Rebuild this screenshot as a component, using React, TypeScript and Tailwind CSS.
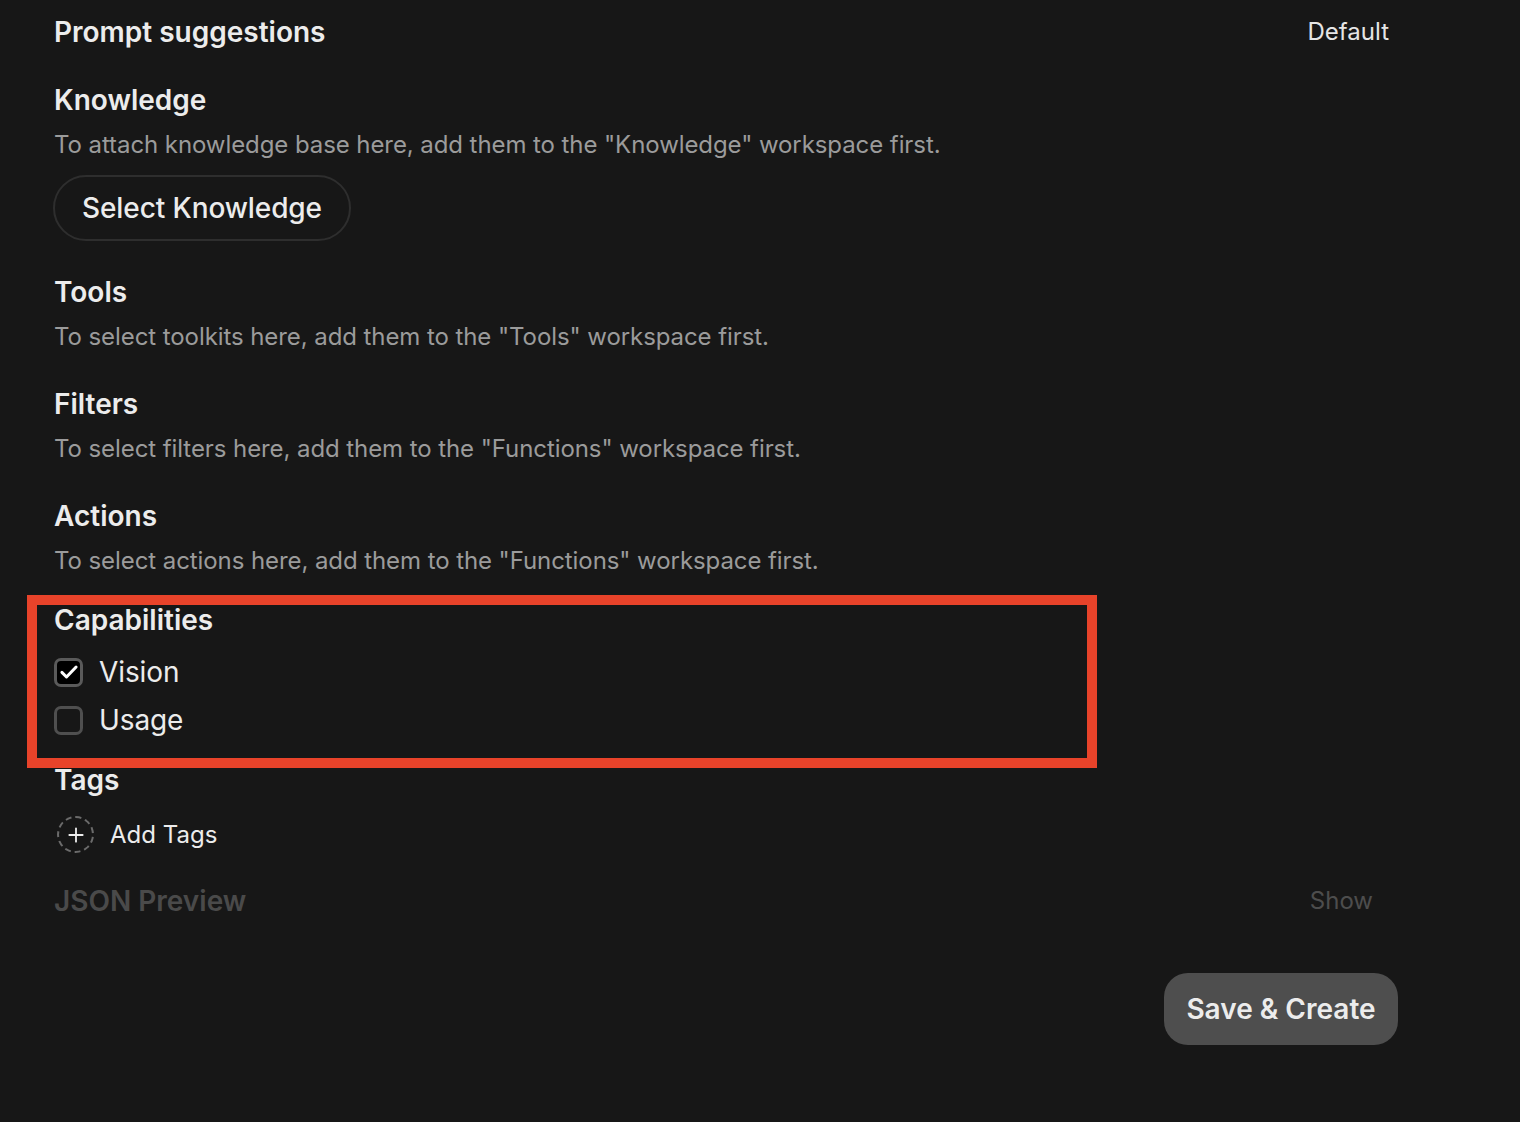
import React from 'react'

const font = { fontFamily: 'Inter, "Noto Sans", sans-serif' }

function Section({ title, desc }: { title: string; desc: string }) {
  return (
    <div>
      <div className="text-[28px] leading-[36px] font-semibold text-[#ececec]">{title}</div>
      <div className="mt-[11px] text-[24px] leading-[32px] text-[#9b9b9b] tracking-[-0.08px]">{desc}</div>
    </div>
  )
}

function Checkbox({ checked, label }: { checked: boolean; label: string }) {
  return (
    <div className="flex items-center gap-4 h-[36px]">
      <div
        className={
          checked
            ? 'w-[29px] h-[29px] rounded-[7px] border-[3px] border-[#5a5a5a] bg-black flex items-center justify-center'
            : 'w-[29px] h-[29px] rounded-[7px] border-[3px] border-[#4f4f4f]'
        }
      >
        {checked && (
          <svg width="20" height="20" viewBox="0 0 24 24" fill="none">
            <path d="M3.5 12.5l5.5 5.5L20.5 6" stroke="#fff" strokeWidth="3.6" strokeLinecap="round" strokeLinejoin="round" />
          </svg>
        )}
      </div>
      <span className="text-[28px] leading-[36px] text-[#ececec] tracking-[-0.1px]">{label}</span>
    </div>
  )
}

export default function App() {
  return (
    <div className="min-h-[1122px] w-[1520px] bg-[#171717] relative" style={font}>
      <div className="pl-[54px] pt-[14px] w-[1398px]">
        <div className="flex items-center justify-between">
          <div className="text-[28px] leading-[36px] font-semibold text-[#ececec]">Prompt suggestions</div>
          <div className="text-[24px] leading-[36px] text-[#e5e5e5] mr-[9px]">Default</div>
        </div>

        <div className="mt-[32px]">
          <Section title="Knowledge" desc={'To attach knowledge base here, add them to the "Knowledge" workspace first.'} />
          <button className="mt-[14px] -ml-[1px] h-[66px] px-[27px] rounded-full border-2 border-[#2e2e2e] text-[28px] font-medium text-[#ececec] tracking-[-0.1px]">
            Select Knowledge
          </button>
        </div>

        <div className="mt-[33px]">
          <Section title="Tools" desc={'To select toolkits here, add them to the "Tools" workspace first.'} />
        </div>
        <div className="mt-[33px]">
          <Section title="Filters" desc={'To select filters here, add them to the "Functions" workspace first.'} />
        </div>
        <div className="mt-[33px]">
          <Section title="Actions" desc={'To select actions here, add them to the "Functions" workspace first.'} />
        </div>

        <div className="mt-[25px]">
          <div className="text-[28px] leading-[36px] font-semibold text-[#ececec]">Capabilities</div>
          <div className="mt-[16px] flex flex-col gap-[12px]">
            <Checkbox checked label="Vision" />
            <Checkbox checked={false} label="Usage" />
          </div>
        </div>

        <div className="mt-[24px]">
          <div className="text-[28px] leading-[36px] font-semibold text-[#ececec]">Tags</div>
          <div className="mt-[18px] flex items-center gap-[16px] ml-[3px]">
            <div className="w-[37px] h-[37px] rounded-full border-2 border-dashed border-[#6b6b6b] flex items-center justify-center">
              <svg width="20" height="20" viewBox="0 0 24 24" fill="none">
                <path d="M12 4v16M4 12h16" stroke="#ececec" strokeWidth="2.2" strokeLinecap="round" />
              </svg>
            </div>
            <span className="text-[24px] leading-[36px] text-[#ececec]">Add Tags</span>
          </div>
        </div>

        <div className="mt-[30px] flex items-center justify-between">
          <div className="text-[28px] leading-[36px] font-semibold text-[#4a4a4a]">JSON Preview</div>
          <div className="text-[24px] leading-[36px] text-[#4d4d4d] mr-[25px]">Show</div>
        </div>

        <div className="mt-[54px] flex justify-end">
          <button className="h-[72px] w-[234px] rounded-[24px] bg-[#4e4e4e] text-[28px] font-semibold text-[#ececec]">
            Save &amp; Create
          </button>
        </div>
      </div>

      <div className="absolute left-[27px] top-[595px] w-[1070px] h-[173px] border-[10px] border-[#e8432a] pointer-events-none" />
    </div>
  )
}
